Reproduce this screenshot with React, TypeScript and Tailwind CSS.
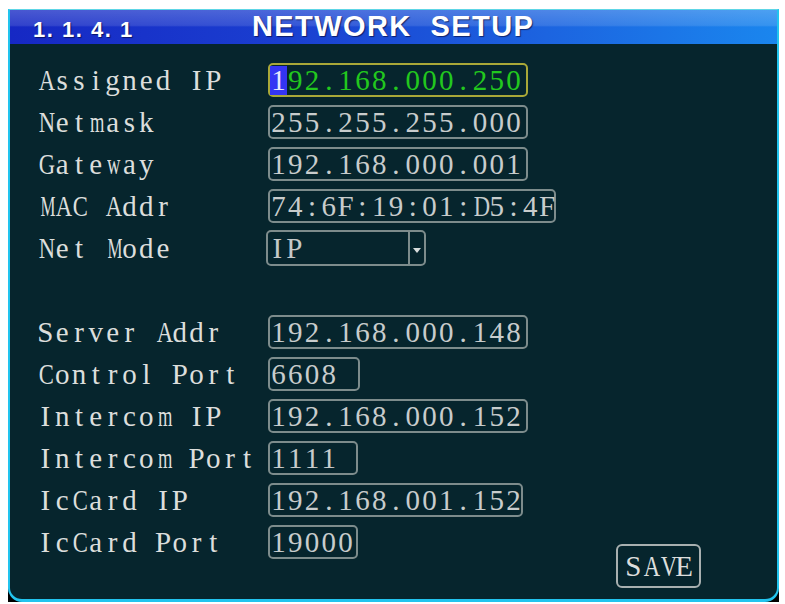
import React from "react";

// The DVR OSD font is a thin, narrow serif on a fixed pitch: serif glyphs in fixed cells.
const serif = "font-['Liberation_Serif','Times_New_Roman',serif]";

function squeeze(ch: string) {
  if ("MW".includes(ch)) return "scale-x-[0.58]";
  if ("mw".includes(ch)) return "scale-x-[0.64]";
  if ("ACDGNVOQHUK".includes(ch)) return "scale-x-[0.78]";
  return "";
}

function Mono({ text, first }: { text: string; first?: string }) {
  return (
    <span className="inline-flex">
      {text.split("").map((ch, i) => (
        <span
          key={i}
          className={`inline-block w-[16.8px] text-center ${squeeze(ch)} ${i === 0 && first ? first : ""}`}
        >
          {ch === " " ? "\u00a0" : ch}
        </span>
      ))}
    </span>
  );
}

interface Row {
  label: string;
  value?: string;
  width?: string;
  kind?: "active" | "select" | "empty";
}

const rows: Row[] = [
  { label: "Assigned IP", value: "192.168.000.250", width: "w-[260px]", kind: "active" },
  { label: "Netmask", value: "255.255.255.000", width: "w-[260px]" },
  { label: "Gateway", value: "192.168.000.001", width: "w-[260px]" },
  { label: "MAC Addr", value: "74:6F:19:01:D5:4F", width: "w-[288px]" },
  { label: "Net Mode", value: "IP", kind: "select" },
  { label: "", kind: "empty" },
  { label: "Server Addr", value: "192.168.000.148", width: "w-[260px]" },
  { label: "Control Port", value: "6608", width: "w-[92px]" },
  { label: "Intercom IP", value: "192.168.000.152", width: "w-[260px]" },
  { label: "Intercom Port", value: "1111", width: "w-[90px]" },
  { label: "IcCard IP", value: "192.168.001.152", width: "w-[255px]" },
  { label: "IcCard Port", value: "19000", width: "w-[90px]" },
];

function Field({ row }: { row: Row }) {
  if (row.kind === "select") {
    return (
      <div className="-ml-[2px] flex h-[36px] w-[160px] rounded-[5px] border-2 border-[#7d8c8c]">
        <div className="flex w-[142px] items-center border-r-2 border-[#7d8c8c] pl-[1px] text-[#c4c8c8]">
          <Mono text={row.value!} />
        </div>
        <div className="flex flex-1 items-center justify-center pt-[4px]">
          <div className="h-0 w-0 border-x-[4px] border-t-[5px] border-x-transparent border-t-[#d8dcdc]" />
        </div>
      </div>
    );
  }
  if (row.kind === "active") {
    return (
      <div
        className={`flex h-[34px] ${row.width} items-center rounded-[5px] border-2 border-[#a9a838] text-[#22c81e]`}
      >
        <Mono text={row.value!} first="bg-[#3434f4] text-[#e8e8ff]" />
      </div>
    );
  }
  return (
    <div
      className={`flex h-[34px] ${row.width} items-center rounded-[5px] border-2 border-[#7d8c8c] text-[#c8cccc]`}
    >
      <Mono text={row.value!} />
    </div>
  );
}

export default function App() {
  return (
    <div className="h-[604px] w-[785px] overflow-hidden bg-white pl-[8px] pt-[9px]">
      <div className="h-[593px] w-[771px] bg-black">
        <div className="flex h-full flex-col overflow-hidden rounded-b-[14px] border-x-2 border-t border-b-[3px] border-[#22c4ee] border-t-[#5ed6e6] bg-[#06252d]">
          {/* Header */}
          <div className="flex h-[34px] shrink-0 items-end bg-[linear-gradient(to_bottom,rgba(255,255,255,0.22)_0%,rgba(255,255,255,0.12)_45%,rgba(255,255,255,0)_50%),linear-gradient(to_right,#1628c4_0%,#1a3ed0_35%,#1c64e0_70%,#1a86ee_100%)] pb-[3px] font-['Liberation_Sans',Arial,sans-serif] font-bold text-white">
            <span className="w-[242px] pl-[23px] text-[22px] leading-none tracking-[1.5px] whitespace-pre [text-shadow:1px_1px_1px_rgba(0,0,40,0.6)]">
              1. 1. 4. 1
            </span>
            <span className="text-[29px] leading-none tracking-[1.4px] whitespace-pre [text-shadow:1px_1px_1px_rgba(0,0,40,0.6)]">
              NETWORK  SETUP
            </span>
          </div>

          {/* Body */}
          <div className={`flex flex-1 ${serif} text-[29px] leading-none`}>
            <div className="flex flex-col gap-[8px] pl-[27px] pt-[19px]">
              {rows.map((row, i) => (
                <div key={i} className="flex h-[34px] items-center">
                  <div className="w-[231px] text-[#dcdedc]">
                    <Mono text={row.label} />
                  </div>
                  {row.kind !== "empty" && <Field row={row} />}
                </div>
              ))}
            </div>
            <div className="flex flex-1 items-end justify-end pb-[11px] pr-[76px]">
              <div className="flex h-[44px] w-[85px] items-center justify-center rounded-[6px] border-2 border-[#a8b0b0] text-[#dcdedc]">
                <Mono text="SAVE" />
              </div>
            </div>
          </div>
        </div>
      </div>
    </div>
  );
}
